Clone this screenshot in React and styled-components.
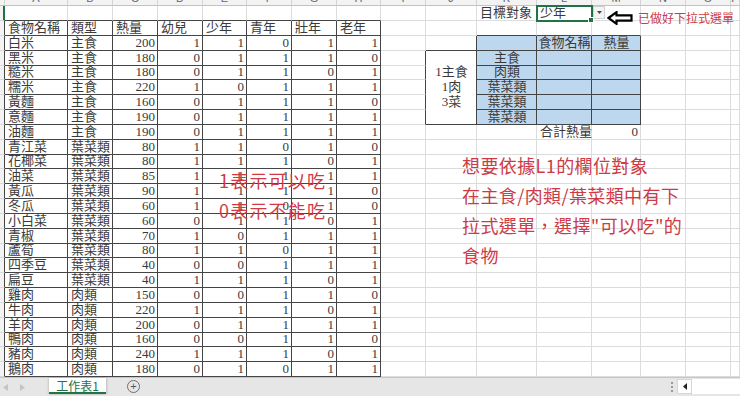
import React from "react";
import styled, { createGlobalStyle } from "styled-components";

const GRID = "#dcdcdc";
const DARK = "#444";
const GREEN = "#217346";
const RED = "#cf3a45";
const BLUE = "#bdd7ee";

const COLS = ["", "A", "B", "C", "D", "E", "F", "G", "H", "I", "J", "K", "L", "M", "N", "O", "P"];
const WIDTHS = [5, 63, 45, 45, 45, 44, 45, 45, 44, 45, 51, 60, 55, 49, 45, 45, 9];
const HEIGHTS = [6, 14.5, 15.5, ...Array(23).fill(14.83)];

const HEADERS = ["食物名稱", "類型", "熱量", "幼兒", "少年", "青年", "壯年", "老年"];

const foods = [
  ["白米", "主食", 200, 1, 1, 0, 1, 1],
  ["黑米", "主食", 180, 0, 1, 1, 1, 0],
  ["糙米", "主食", 180, 0, 1, 1, 0, 1],
  ["糯米", "主食", 220, 1, 0, 1, 1, 1],
  ["黃麵", "主食", 160, 0, 1, 1, 1, 0],
  ["意麵", "主食", 190, 0, 1, 1, 1, 1],
  ["油麵", "主食", 190, 0, 1, 1, 1, 1],
  ["青江菜", "葉菜類", 80, 1, 1, 0, 1, 0],
  ["花椰菜", "葉菜類", 80, 1, 1, 1, 0, 1],
  ["油菜", "葉菜類", 85, 1, 1, 1, 1, 1],
  ["黃瓜", "葉菜類", 90, 1, 1, 1, 1, 0],
  ["冬瓜", "葉菜類", 60, 1, 1, 0, 1, 0],
  ["小白菜", "葉菜類", 60, 0, 1, 1, 0, 1],
  ["青椒", "葉菜類", 70, 1, 0, 1, 1, 1],
  ["蘆筍", "葉菜類", 80, 1, 1, 0, 1, 1],
  ["四季豆", "葉菜類", 40, 0, 0, 1, 1, 1],
  ["扁豆", "葉菜類", 40, 1, 1, 1, 0, 1],
  ["雞肉", "肉類", 150, 0, 0, 1, 1, 0],
  ["牛肉", "肉類", 220, 1, 1, 1, 0, 1],
  ["羊肉", "肉類", 200, 0, 1, 1, 1, 1],
  ["鴨肉", "肉類", 160, 0, 0, 1, 1, 0],
  ["豬肉", "肉類", 240, 1, 1, 1, 0, 1],
  ["鵝肉", "肉類", 180, 0, 1, 0, 1, 1],
];

const PICK_LABELS = ["主食", "肉類", "葉菜類", "葉菜類", "葉菜類"];

// which cells carry a drawn border (data table, blue pick table, merged note)
const bordered = (r, c) =>
  (r >= 2 && r <= 25 && c >= 1 && c <= 8) ||
  (r >= 3 && r <= 8 && c >= 11 && c <= 13) ||
  (r >= 4 && r <= 8 && c === 10);

const GlobalStyle = createGlobalStyle`
  body {
    margin: 0;
    background: #fff;
  }
`;

const Page = styled.div`
  position: relative;
  width: 740px;
  height: 411px;
  overflow: hidden;
  background: #fff;
  display: flex;
  flex-direction: column;
`;

const Sheet = styled.div`
  display: grid;
  grid-template-columns: ${WIDTHS.map((w) => w + "px").join(" ")};
  grid-template-rows: ${HEIGHTS.map((h) => h + "px").join(" ")};
  font-family: "Liberation Serif", "Noto Sans CJK TC", serif;
`;

const ColHead = styled.div`
  box-sizing: border-box;
  display: flex;
  align-items: flex-end;
  justify-content: center;
  overflow: hidden;
  background: #f3f3f3;
  border-right: 1px solid #d4d4d4;
  border-bottom: 1px solid #c2c2c2;
  font-family: "Liberation Sans", "Noto Sans", sans-serif;
  font-size: 11px;
  color: #666;

  span {
    line-height: 13px;
    display: block;
  }
`;

const RowHead = styled.div`
  box-sizing: border-box;
  background: #f3f3f3;
  border-bottom: 1px solid ${GRID};
  border-right: ${(p) => (p.$active ? `2px solid ${GREEN}` : `1px solid ${p.$dark ? DARK : "#c2c2c2"}`)};
`;

const Cell = styled.div`
  box-sizing: border-box;
  display: flex;
  align-items: flex-end;
  justify-content: ${(p) =>
    p.$align === "right" ? "flex-end" : p.$align === "center" ? "center" : "flex-start"};
  padding: 0 2px 0 3px;
  white-space: nowrap;
  font-size: 13px;
  line-height: 14px;
  color: #3a3a3a;
  background: ${(p) => (p.$blue ? BLUE : "#fff")};
  border-right: 1px solid ${(p) => (p.$darkRight ? DARK : GRID)};
  border-bottom: 1px solid ${(p) => (p.$darkBottom ? DARK : GRID)};
`;

const MergedCell = styled(Cell)`
  grid-row: span 5;
  flex-direction: column;
  align-items: center;
  justify-content: center;
  line-height: 15px;
  padding-bottom: 2px;
`;

const SelectedCell = styled(Cell)`
  position: relative;
  outline: 2px solid ${GREEN};
  outline-offset: -1px;
  z-index: 1;

  &::after {
    content: "";
    position: absolute;
    right: -3px;
    bottom: -3px;
    width: 4px;
    height: 4px;
    background: ${GREEN};
    border: 1px solid #fff;
  }
`;

const DropButton = styled.div`
  box-sizing: border-box;
  width: 12px;
  height: 13px;
  margin: 0 0 0 -2px;
  align-self: center;
  background: #f4f4f4;
  border: 1px solid #cfcfcf;
  display: flex;
  align-items: center;
  justify-content: center;
`;

const Annotation = styled.div`
  position: absolute;
  left: ${(p) => p.$x}px;
  top: ${(p) => p.$y}px;
  font-family: "Noto Sans CJK TC", "Noto Sans", sans-serif;
  font-size: ${(p) => p.$size || 18}px;
  line-height: ${(p) => p.$lh || 30}px;
  letter-spacing: ${(p) => p.$ls ?? 1}px;
  color: ${RED};
  white-space: nowrap;
`;

const Callout = styled.div`
  position: absolute;
  left: 607px;
  top: 11px;
  display: flex;
  align-items: center;
  gap: 5px;
  font-family: "Noto Sans CJK TC", sans-serif;
  font-size: 12px;
  line-height: 14px;
  color: ${RED};
`;

const TabBar = styled.div`
  box-sizing: border-box;
  height: 19px;
  display: flex;
  align-items: stretch;
  background: #e6e6e6;
  border-top: 1px solid #c6c6c6;
`;

const NavArrows = styled.div`
  width: 49px;
  display: flex;
  align-items: center;
  gap: 12px;
  padding-left: 3px;
  box-sizing: border-box;
`;

const SheetTab = styled.div`
  box-sizing: border-box;
  width: 57px;
  height: 16px;
  background: #fff;
  border-bottom: 2px solid ${GREEN};
  box-shadow: 1px 0 2px rgba(0, 0, 0, 0.18), -1px 0 2px rgba(0, 0, 0, 0.12);
  display: flex;
  align-items: center;
  justify-content: center;
  font-family: "Noto Sans CJK TC", "Noto Sans", sans-serif;
  font-size: 12px;
  color: ${GREEN};
`;

const AddButton = styled.div`
  box-sizing: border-box;
  width: 13px;
  height: 13px;
  margin: 2px 0 0 21px;
  border: 1px solid #6f6f6f;
  border-radius: 50%;
  display: flex;
  align-items: center;
  justify-content: center;
  font-family: "Liberation Sans", sans-serif;
  font-size: 11px;
  line-height: 11px;
  color: #555;
`;

const Spacer = styled.div`
  flex: 1;
`;

const Dots = styled.div`
  width: 10px;
  display: flex;
  flex-direction: column;
  justify-content: center;
  align-items: center;
  gap: 2px;

  i {
    width: 2px;
    height: 2px;
    background: #9a9a9a;
  }
`;

const ScrollButton = styled.div`
  box-sizing: border-box;
  width: 15px;
  margin: 1px 0 2px 0;
  background: #fff;
  border: 1px solid #d6d6d6;
  display: flex;
  align-items: center;
  justify-content: center;
`;

const ScrollTrack = styled.div`
  width: 48px;
  margin: 1px 0 2px 0;
  background: #fff;
`;

const BelowBar = styled.div`
  flex: 1;
  background: #fff;
`;

function cellContent(r, c) {
  if (r === 1 && c === 11) return { text: "目標對象" };
  if (r === 2 && c >= 1 && c <= 8) return { text: HEADERS[c - 1] };
  if (r >= 3 && r <= 25 && c >= 1 && c <= 8) {
    const v = foods[r - 3][c - 1];
    return { text: String(v), align: c >= 3 ? "right" : "left" };
  }
  if (r === 3 && c === 11) return { blue: true };
  if (r === 3 && c === 12) return { text: "食物名稱", align: "center", blue: true };
  if (r === 3 && c === 13) return { text: "熱量", align: "center", blue: true };
  if (r >= 4 && r <= 8 && c === 11) return { text: PICK_LABELS[r - 4], align: "center", blue: true };
  if (r >= 4 && r <= 8 && (c === 12 || c === 13)) return { blue: true };
  if (r === 9 && c === 12) return { text: "合計熱量" };
  if (r === 9 && c === 13) return { text: "0", align: "right" };
  return {};
}

function SheetGrid() {
  const out = [];
  for (let r = 0; r < HEIGHTS.length; r++) {
    for (let c = 0; c < COLS.length; c++) {
      const key = `${r}-${c}`;
      if (r === 0) {
        out.push(
          <ColHead key={key}>
            <span>{COLS[c]}</span>
          </ColHead>
        );
        continue;
      }
      if (c === 0) {
        out.push(<RowHead key={key} $active={r === 1} $dark={bordered(r, 1)} />);
        continue;
      }
      if (c === 10 && r >= 5 && r <= 8) continue;

      const darkRight = bordered(r, c) || bordered(r, c + 1);
      if (c === 10 && r === 4) {
        out.push(
          <MergedCell key={key} $darkRight $darkBottom>
            <div>1主食</div>
            <div>1肉</div>
            <div>3菜</div>
          </MergedCell>
        );
        continue;
      }
      const darkBottom = bordered(r, c) || bordered(r + 1, c);

      if (r === 1 && c === 12) {
        out.push(
          <SelectedCell key={key} $darkRight={darkRight} $darkBottom={darkBottom}>
            少年
          </SelectedCell>
        );
        continue;
      }
      if (r === 1 && c === 13) {
        out.push(
          <Cell key={key}>
            <DropButton>
              <svg width="5" height="3" viewBox="0 0 5 3">
                <path d="M0 0 H5 L2.5 3 Z" fill="#444" />
              </svg>
            </DropButton>
          </Cell>
        );
        continue;
      }
      const { text, align, blue } = cellContent(r, c);
      out.push(
        <Cell key={key} $align={align} $blue={blue} $darkRight={darkRight} $darkBottom={darkBottom}>
          {text}
        </Cell>
      );
    }
  }
  return <Sheet>{out}</Sheet>;
}

export default function App() {
  return (
    <Page>
      <GlobalStyle />
      <SheetGrid />
      <TabBar>
        <NavArrows>
          <svg width="5" height="7" viewBox="0 0 5 7">
            <path d="M5 0 V7 L0 3.5 Z" fill="#c4c4c4" />
          </svg>
          <svg width="5" height="7" viewBox="0 0 5 7">
            <path d="M0 0 V7 L5 3.5 Z" fill="#c4c4c4" />
          </svg>
        </NavArrows>
        <SheetTab>工作表1</SheetTab>
        <AddButton>+</AddButton>
        <Spacer />
        <Dots>
          <i />
          <i />
          <i />
        </Dots>
        <ScrollButton>
          <svg width="4" height="7" viewBox="0 0 4 7">
            <path d="M4 0 V7 L0 3.5 Z" fill="#222" />
          </svg>
        </ScrollButton>
        <ScrollTrack />
      </TabBar>
      <BelowBar />

      <Callout>
        <svg width="26" height="14" viewBox="0 0 26 14">
          <path
            d="M1.5 7 L9.5 1.2 V4.3 H24.5 V9.7 H9.5 V12.8 Z"
            fill="#fff"
            stroke="#000"
            strokeWidth="2.2"
            strokeLinejoin="miter"
          />
        </svg>
        <span>已做好下拉式選單</span>
      </Callout>

      <Annotation $x={219} $y={166} $lh={29.5} $ls={1.2}>
        <div>1表示可以吃</div>
        <div>0表示不能吃</div>
      </Annotation>

      <Annotation $x={462} $y={150} $ls={0.4}>
        <div>想要依據L1的欄位對象</div>
        <div>在主食/肉類/葉菜類中有下</div>
        <div>拉式選單，選擇"可以吃"的</div>
        <div>食物</div>
      </Annotation>
    </Page>
  );
}
